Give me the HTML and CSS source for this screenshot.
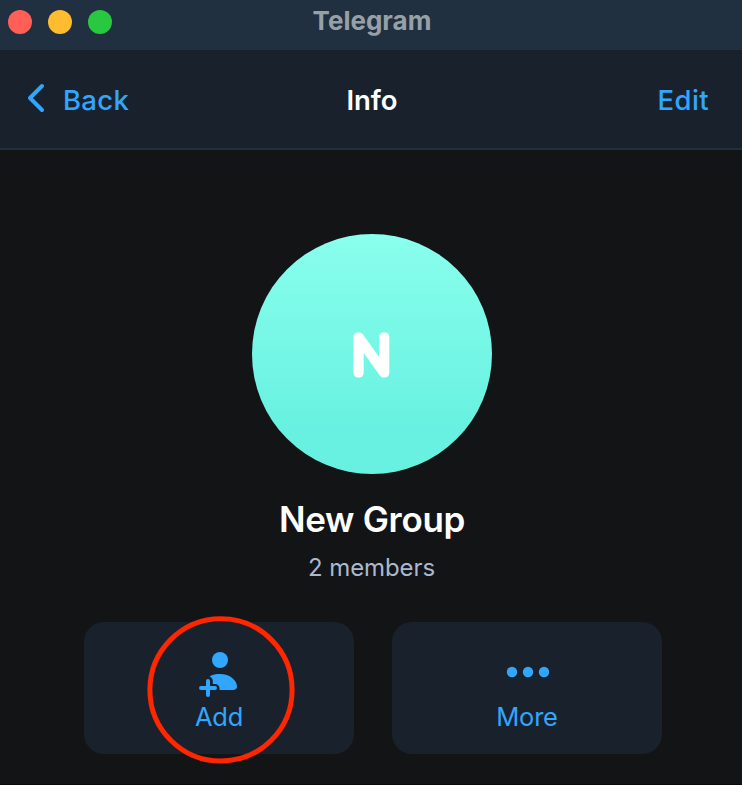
FILE: index.html
```html
<!DOCTYPE html>
<html lang="en">
<head>
<meta charset="utf-8">
<title>Telegram</title>
<link rel="stylesheet" href="styles.css">
</head>
<body>
<div class="window">
  <header class="titlebar">
    <div class="lights"><i class="light close"></i><i class="light minimize"></i><i class="light expand"></i></div>
    <span class="app-name">Telegram</span>
  </header>
  <nav class="navbar">
    <a class="back"><svg class="chevron" width="18" height="30" viewBox="0 0 18 30"><path d="M15 3 3 15 15 27"/></svg><span class="back-label">Back</span></a>
    <span class="nav-title">Info</span>
    <a class="edit">Edit</a>
  </nav>
  <main class="content">
    <div class="avatar"><svg width="240" height="240" viewBox="0 0 240 240"><text class="initial" x="119.500" y="138.500" text-anchor="middle">N</text></svg></div>
    <h1 class="name">New Group</h1>
    <p class="members">2 members</p>
    <div class="actions">
      <div class="card">
        <svg class="icon" width="44" height="48" viewBox="0 0 44 48">
          <circle cx="22" cy="10" r="8"/>
          <path d="M11.500 26.500C14.500 24.500 18 24 22 24C32 24 39 30.500 39 36.500C39 38.800 37.500 40 35 40H21.500C22 36.500 20 34 17 34H14.800V31C14.800 29 13.500 27 11.500 26.500Z"/>
          <path class="plus" d="M10 31V45M3 38H17"/>
        </svg>
        <span class="add-label">Add</span>
        <svg class="ring" width="148" height="148" viewBox="0 0 148 148"><circle cx="74" cy="73.900" r="71.100"/></svg>
      </div>
      <div class="card">
        <svg class="icon" width="44" height="48" viewBox="0 0 44 48"><circle cx="6" cy="22" r="5.200"/><circle cx="22" cy="22" r="5.200"/><circle cx="38" cy="22" r="5.200"/></svg>
        <span class="more-label">More</span>
      </div>
    </div>
  </main>
</div>
</body>
</html>
```

FILE: styles.css
```css
* { box-sizing: border-box; }
body { margin: 0; background: #131416; font-family: Inter, "Liberation Sans", sans-serif; }
.window { height: 785px; overflow: hidden; border-bottom: 1px solid #08090a; }
.titlebar { display: grid; grid-template-columns: 1fr auto 1fr; height: 50px; background: #213040; }
.lights { display: flex; gap: 16px; padding: 10px 8px; }
.light { width: 24px; height: 24px; border-radius: 50%; }
.close { background: #ff5f57; }
.minimize { background: #febc2e; }
.expand { background: #28c840; }
.app-name { padding-left: 2px; font-size: 26px; line-height: 42px; font-weight: 700; color: #97a0a8; }
.navbar { display: grid; grid-template-columns: 1fr auto 1fr; height: 100px; padding: 0 33px 0 27px; background: #19222c; border-bottom: 2px solid #213040; color: #31a6ff; font-size: 27.500px; font-weight: 550; line-height: 101px; }
.back { display: flex; align-items: center; gap: 18px; letter-spacing: 0.300px; }
.chevron { fill: none; stroke: #31a6ff; stroke-width: 4; stroke-linecap: round; stroke-linejoin: round; margin-bottom: 5px; }
.nav-title { color: #fff; font-weight: 600; padding-left: 8px; }
.edit { justify-self: end; letter-spacing: 0.400px; }
.content { display: flex; flex-direction: column; align-items: center; padding: 84px 80px 0 84px; }
.avatar { width: 240px; height: 240px; border-radius: 50%; background: linear-gradient(#8affee, #68f1e0 80%); margin-left: -2px; }
.avatar svg { display: block; }
.initial { font: 100 49px Inter; fill: #fff; stroke: #fff; stroke-width: 9px; stroke-linejoin: round; stroke-linecap: round; }
.name { margin: 23px 0 0 -2px; color: #fff; font-size: 35px; font-weight: 600; letter-spacing: -0.300px; line-height: 44px; }
.members { margin: 12px 0 0 -3px; color: #a9bad0; font-size: 24px; letter-spacing: -0.100px; line-height: 30px; }
.actions { display: grid; grid-template-columns: 270px 270px; gap: 38px; margin-top: 39px; width: 578px; }
.card { position: relative; display: flex; flex-direction: column; align-items: center; height: 132px; padding-top: 28px; border-radius: 20px; background: #19222c; color: #31a6ff; font-size: 25.500px; letter-spacing: -0.200px; line-height: 37px; }
.icon { fill: #31a6ff; margin-left: 2px; }
.plus { fill: none; stroke: #31a6ff; stroke-width: 4; stroke-linecap: round; }
.ring { position: absolute; left: 63px; top: -6px; fill: none; stroke: #ff2600; stroke-width: 5; }
```
